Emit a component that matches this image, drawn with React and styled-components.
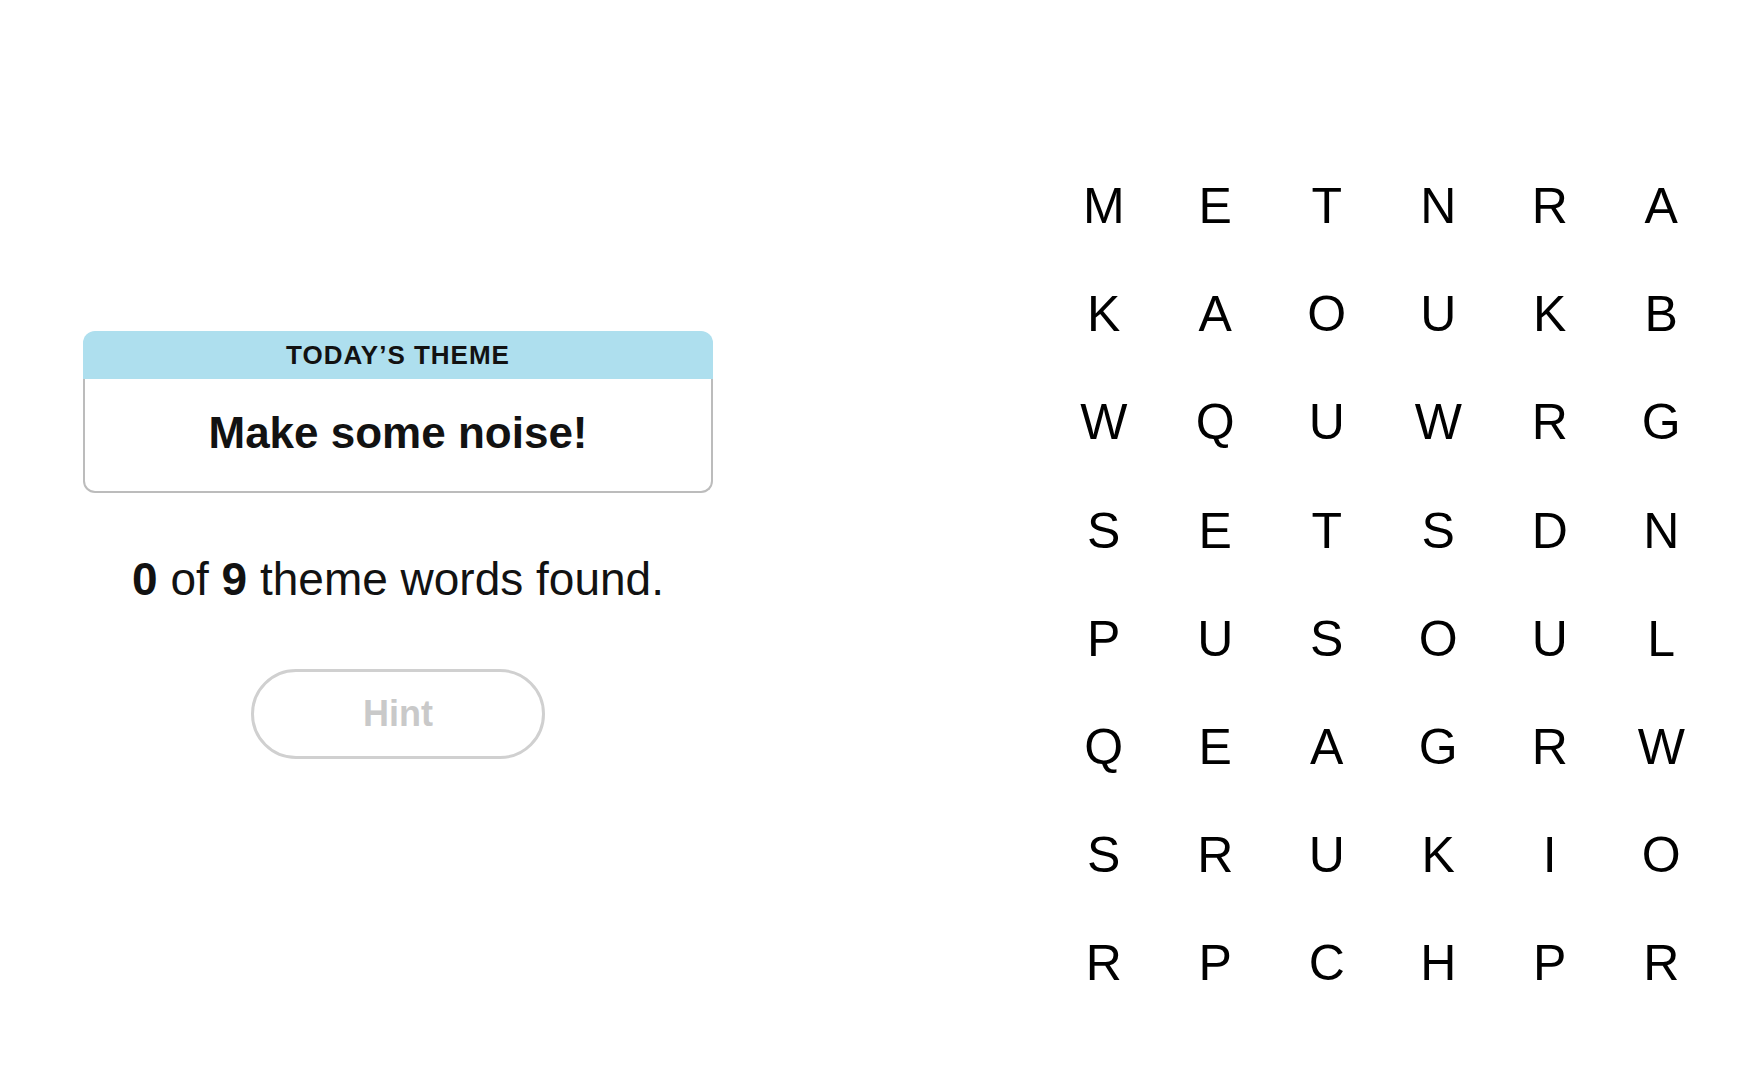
import React from 'react';
import styled, { createGlobalStyle } from 'styled-components';

const GlobalStyle = createGlobalStyle`
  html, body {
    margin: 0;
    padding: 0;
    background: #ffffff;
  }
  body {
    font-family: 'Liberation Sans', Arial, sans-serif;
    color: #121212;
  }
`;

const board = [
  ['M', 'E', 'T', 'N', 'R', 'A'],
  ['K', 'A', 'O', 'U', 'K', 'B'],
  ['W', 'Q', 'U', 'W', 'R', 'G'],
  ['S', 'E', 'T', 'S', 'D', 'N'],
  ['P', 'U', 'S', 'O', 'U', 'L'],
  ['Q', 'E', 'A', 'G', 'R', 'W'],
  ['S', 'R', 'U', 'K', 'I', 'O'],
  ['R', 'P', 'C', 'H', 'P', 'R'],
];

const App = () => {
  const found = 0;
  const total = 9;

  return (
    <>
      <GlobalStyle />
      <Page>
        <SidePanel>
          <ThemeCard>
            <ThemeHeader>TODAY’S THEME</ThemeHeader>
            <ThemeBody>Make some noise!</ThemeBody>
          </ThemeCard>
          <Progress>
            <b>{found}</b> of <b>{total}</b> theme words found.
          </Progress>
          <HintButton disabled>Hint</HintButton>
        </SidePanel>
        <Board>
          {board.flat().map((letter, index) => (
            <Letter key={index}>{letter}</Letter>
          ))}
        </Board>
      </Page>
    </>
  );
};

export default App;

const Page = styled.div`
  display: flex;
  align-items: flex-start;
  gap: 335px;
  width: 1762px;
  height: 1084px;
  padding-left: 83px;
  box-sizing: border-box;
  overflow: hidden;
`;

const SidePanel = styled.div`
  width: 630px;
  padding-top: 331px;
  display: flex;
  flex-direction: column;
  align-items: center;
`;

const ThemeCard = styled.div`
  width: 100%;
  display: flex;
  flex-direction: column;
`;

const ThemeHeader = styled.div`
  height: 48px;
  display: flex;
  align-items: center;
  justify-content: center;
  background: #aedfee;
  border-radius: 12px 12px 0 0;
  font-size: 26px;
  font-weight: 700;
  letter-spacing: 1px;
  color: #121212;
`;

const ThemeBody = styled.div`
  height: 114px;
  display: flex;
  align-items: center;
  justify-content: center;
  padding-bottom: 4px;
  box-sizing: border-box;
  border: 2px solid #bcbcbc;
  border-top: none;
  border-radius: 0 0 12px 12px;
  font-size: 44px;
  font-weight: 700;
  color: #121212;
`;

const Progress = styled.p`
  margin: 59px 0 0;
  font-size: 46px;
  color: #121212;

  b {
    font-weight: 700;
  }
`;

const HintButton = styled.button`
  margin-top: 63px;
  width: 294px;
  height: 90px;
  border: 3px solid #d0d0d0;
  border-radius: 45px;
  background: #ffffff;
  font-family: 'Liberation Sans', Arial, sans-serif;
  font-size: 36px;
  font-weight: 700;
  color: #c9c9c9;
  padding: 0;
`;

const Board = styled.div`
  padding-top: 152px;
  display: grid;
  grid-template-columns: repeat(6, 111.5px);
  grid-auto-rows: 108.2px;
`;

const Letter = styled.div`
  display: flex;
  align-items: center;
  justify-content: center;
  font-size: 50px;
  color: #000000;
`;
